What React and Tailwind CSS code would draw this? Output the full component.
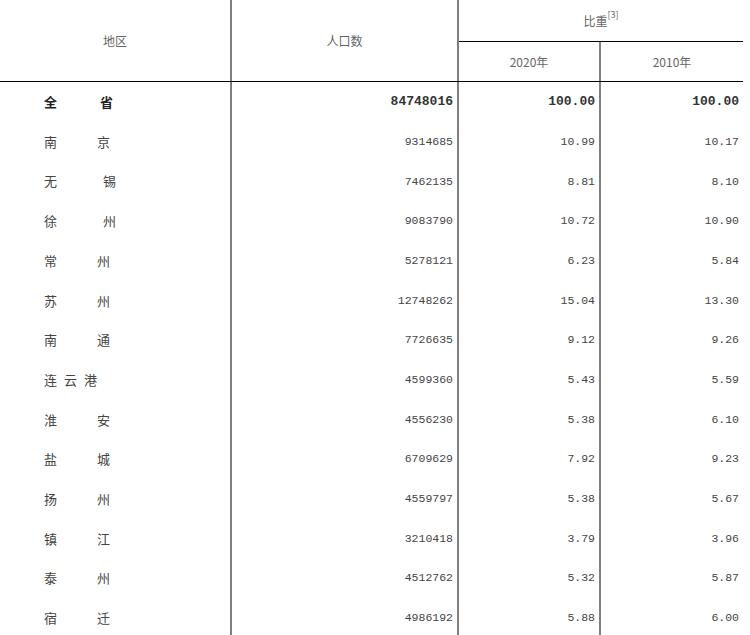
import React from 'react';

const cjk = { fontFamily: '"Noto Sans CJK SC", sans-serif' };
const mono = { fontFamily: '"Liberation Mono", "Noto Sans CJK SC", monospace' };

const rows = [
  { name: ['全', '省'], gap: 43, pop: '84748016', a: '100.00', b: '100.00', bold: true },
  { name: ['南', '京'], gap: 40, pop: '9314685', a: '10.99', b: '10.17' },
  { name: ['无', '锡'], gap: 46, pop: '7462135', a: '8.81', b: '8.10' },
  { name: ['徐', '州'], gap: 46, pop: '9083790', a: '10.72', b: '10.90' },
  { name: ['常', '州'], gap: 40, pop: '5278121', a: '6.23', b: '5.84' },
  { name: ['苏', '州'], gap: 40, pop: '12748262', a: '15.04', b: '13.30' },
  { name: ['南', '通'], gap: 40, pop: '7726635', a: '9.12', b: '9.26' },
  { name: ['连', '云', '港'], gap: 7, pop: '4599360', a: '5.43', b: '5.59' },
  { name: ['淮', '安'], gap: 40, pop: '4556230', a: '5.38', b: '6.10' },
  { name: ['盐', '城'], gap: 40, pop: '6709629', a: '7.92', b: '9.23' },
  { name: ['扬', '州'], gap: 40, pop: '4559797', a: '5.38', b: '5.67' },
  { name: ['镇', '江'], gap: 40, pop: '3210418', a: '3.79', b: '3.96' },
  { name: ['泰', '州'], gap: 40, pop: '4512762', a: '5.32', b: '5.87' },
  { name: ['宿', '迁'], gap: 40, pop: '4986192', a: '5.88', b: '6.00' },
];

const Num = ({ value, bold }) => (
  <span
    style={mono}
    className={bold ? 'text-[13px] font-bold text-[#333]' : 'text-[11.5px] text-[#444]'}
  >
    {value}
  </span>
);

export default function App() {
  return (
    <div className="w-[750px] h-[635px] overflow-hidden bg-white">
      <div className="w-[743px]">
        {/* header */}
        <div className="flex h-[82px] border-b border-black">
          <div style={cjk} className="w-[232px] border-r-2 border-[#808080] flex items-center justify-center text-[12px] text-[#666]">
            地区
          </div>
          <div style={cjk} className="w-[227px] border-r-2 border-[#808080] flex items-center justify-center text-[12px] text-[#666]">
            人口数
          </div>
          <div className="flex-1 flex flex-col">
            <div style={cjk} className="h-[42px] border-b border-black flex items-center justify-center text-[12px] text-[#666]">
              <span className="flex items-start">
                比重<span className="text-[9px] leading-none -mt-[2px]">[3]</span>
              </span>
            </div>
            <div className="flex-1 flex">
              <div style={cjk} className="w-[142px] border-r-2 border-[#808080] flex items-center justify-center text-[12px] text-[#666]">
                2020年
              </div>
              <div style={cjk} className="flex-1 flex items-center justify-center text-[12px] text-[#666]">
                2010年
              </div>
            </div>
          </div>
        </div>

        {/* body */}
        {rows.map((r, i) => (
          <div key={i} className="flex h-[39.7px]">
            <div
              style={cjk}
              className={`w-[232px] border-r-2 border-[#808080] flex items-center pl-[44px] text-[13px] ${r.bold ? 'font-bold text-[#222]' : 'text-[#444]'}`}
            >
              {r.name.map((c, j) => (
                <span key={j} style={{ marginLeft: j === 0 ? 0 : r.gap }}>{c}</span>
              ))}
            </div>
            <div className="w-[227px] border-r-2 border-[#808080] flex items-center justify-end pr-[4px]">
              <Num value={r.pop} bold={r.bold} />
            </div>
            <div className="w-[142px] border-r-2 border-[#808080] flex items-center justify-end pr-[4px]">
              <Num value={r.a} bold={r.bold} />
            </div>
            <div className="flex-1 flex items-center justify-end pr-[4px]">
              <Num value={r.b} bold={r.bold} />
            </div>
          </div>
        ))}
      </div>
    </div>
  );
}
